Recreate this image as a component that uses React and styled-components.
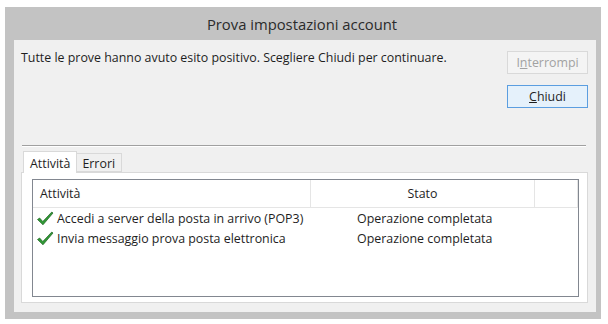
import styled, { createGlobalStyle } from "styled-components";

const Global = createGlobalStyle`
	body {
		margin: 0;
		background: #fff;
		font-family: "Open Sans", "Noto Sans", sans-serif;
		color: #1e1e1e;
	}
`;

const Frame = styled.div`
	margin: 7px 0 0 5px;
	width: 596px;
	height: 312px;
	box-sizing: border-box;
	background: #c3c3c3;
	padding: 0 5px 7px 9px;
	display: flex;
	flex-direction: column;
`;

const TitleBar = styled.div`
	height: 33px;
	display: flex;
	align-items: center;
	justify-content: center;
	font-size: 14.8px;
	color: #2b2b2b;
	padding: 1px 6px 0 0;
	box-sizing: border-box;
`;

const Content = styled.div`
	flex: 1;
	background: #f0f0f0;
	padding: 0 8px 9px 7px;
	display: flex;
	flex-direction: column;
	font-size: 12.4px;
`;

const TopRow = styled.div`
	height: 105px;
	display: flex;
	justify-content: space-between;
`;

const Message = styled.p`
	margin: 10px 0 0;
	line-height: 16px;
`;

const Buttons = styled.div`
	display: flex;
	flex-direction: column;
	gap: 11px;
	padding-top: 11px;
`;

const Button = styled.button`
	width: 81px;
	height: 23px;
	box-sizing: border-box;
	font-family: inherit;
	font-size: 12.4px;
	padding: 0;
	border: 1px solid ${(p) => (p.$default ? "#5b9ee0" : "#d9d9d9")};
	background: ${(p) => (p.$default ? "#e5f1fb" : "#f4f4f4")};
	color: ${(p) => (p.$disabled ? "#a2a2a2" : "#1e1e1e")};
	u {
		text-decoration-thickness: 1px;
	}
`;

const Separator = styled.div`
	margin: 0 2px 0 1px;
	border-top: 1px solid #a0a0a0;
	border-bottom: 1px solid #fff;
`;

const Tabs = styled.div`
	margin-top: 4px;
	display: flex;
	flex-direction: column;
	flex: 1;
`;

const TabStrip = styled.div`
	display: flex;
	align-items: flex-end;
	padding-left: 2px;
	height: 21px;
	position: relative;
	z-index: 1;
`;

const Tab = styled.div`
	box-sizing: border-box;
	height: ${(p) => (p.$active ? "22px" : "19px")};
	margin-bottom: ${(p) => (p.$active ? "-1px" : "0")};
	padding: ${(p) => (p.$active ? "3px 6px 0 6px" : "1px 6px 0 5px")};
	border: 1px solid #d9d9d9;
	border-bottom: ${(p) => (p.$active ? "none" : "1px solid #d9d9d9")};
	border-left: ${(p) => (p.$active ? "1px solid #d9d9d9" : "none")};
	background: ${(p) => (p.$active ? "#fff" : "#f0f0f0")};
`;

const Panel = styled.div`
	flex: 1;
	border: 1px solid #d9d9d9;
	background: #fff;
	padding: 6px 8px 5px 10px;
	display: flex;
`;

const ListView = styled.div`
	flex: 1;
	border: 1px solid #828790;
	background: #fff;
`;

const Header = styled.div`
	display: grid;
	grid-template-columns: 278px 224px 1fr;
	height: 27px;
	border-bottom: 1px solid #e5e5e5;
`;

const HeaderCell = styled.div`
	display: flex;
	align-items: center;
	justify-content: ${(p) => (p.$center ? "center" : "flex-start")};
	padding-left: ${(p) => (p.$center ? "0" : "7px")};
	border-right: 1px solid #e5e5e5;
`;

const Row = styled.div`
	display: grid;
	grid-template-columns: 278px 1fr;
	height: 20px;
	align-items: center;
`;

const TaskCell = styled.div`
	display: flex;
	align-items: center;
	gap: 3px;
	padding-left: 3px;
`;

const StatusCell = styled.div`
	padding-left: 46px;
`;

function Check() {
	return (
		<svg width="18" height="16" viewBox="0 0 18 16">
			<path
				d="M1.5 9.5 L3.6 8 L6.8 11.5 L15.8 2 L17 3 L7 14.8 Z"
				fill="#2f9a35"
				stroke="#1c5e1f"
				strokeWidth="0.7"
				strokeLinejoin="round"
			/>
		</svg>
	);
}

const rows = [
	"Accedi a server della posta in arrivo (POP3)",
	"Invia messaggio prova posta elettronica",
];

export default function App() {
	return (
		<>
			<Global />
			<Frame>
				<TitleBar>Prova impostazioni account</TitleBar>
				<Content>
					<TopRow>
						<Message>
							Tutte le prove hanno avuto esito positivo. Scegliere Chiudi per
							continuare.
						</Message>
						<Buttons>
							<Button $disabled>
								I<u>n</u>terrompi
							</Button>
							<Button $default>
								<u>C</u>hiudi
							</Button>
						</Buttons>
					</TopRow>
					<Separator />
					<Tabs>
						<TabStrip>
							<Tab $active>Attività</Tab>
							<Tab>Errori</Tab>
						</TabStrip>
						<Panel>
							<ListView>
								<Header>
									<HeaderCell>Attività</HeaderCell>
									<HeaderCell $center>Stato</HeaderCell>
									<HeaderCell />
								</Header>
								{rows.map((r) => (
									<Row key={r}>
										<TaskCell>
											<Check />
											{r}
										</TaskCell>
										<StatusCell>Operazione completata</StatusCell>
									</Row>
								))}
							</ListView>
						</Panel>
					</Tabs>
				</Content>
			</Frame>
		</>
	);
}
